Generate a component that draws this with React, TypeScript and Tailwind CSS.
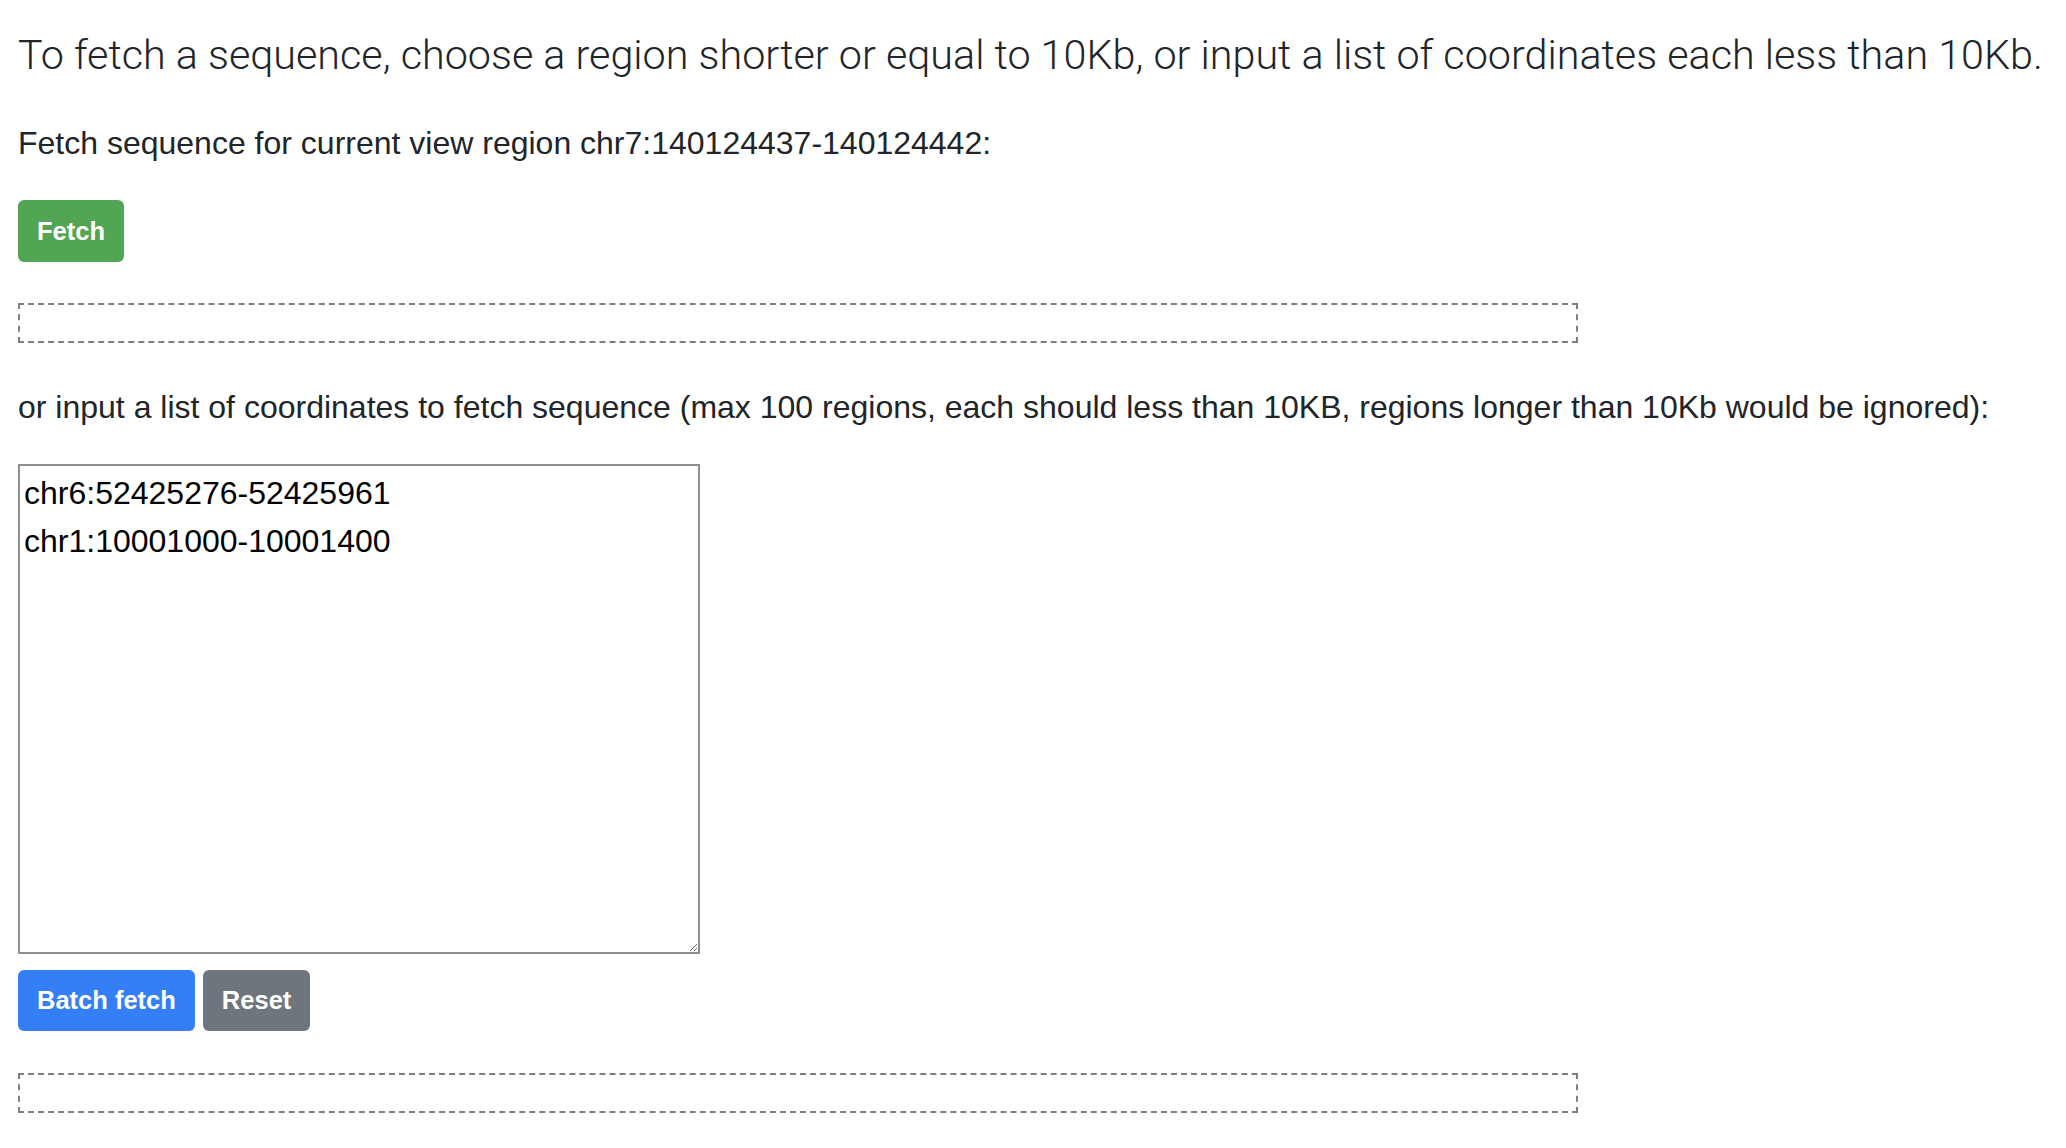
import React from 'react';

const App: React.FC = () => {
    return (
        <div className="min-h-screen bg-white px-[18px] text-[#212529]" style={{ fontFamily: '"Liberation Sans", Arial, sans-serif' }}>
            <p className="pt-[31px] text-[41.3px] leading-[48px] font-light whitespace-nowrap" style={{ fontFamily: 'Roboto, "Liberation Sans", sans-serif' }}>
                To fetch a sequence, choose a region shorter or equal to 10Kb, or input a list of coordinates each less than 10Kb.
            </p>
            <p className="mt-[40px] text-[32px] leading-[48px]">
                Fetch sequence for current view region chr7:140124437-140124442:
            </p>
            <div className="mt-[33px]">
                <button className="h-[62px] px-[19px] rounded-[6px] bg-[#52a552] text-white text-[25.5px] font-bold">
                    Fetch
                </button>
            </div>
            <div className="mt-[41px] h-[40px] w-[1560px] border-2 border-dashed border-[#7f7f7f]" />
            <p className="mt-[40px] text-[32px] leading-[48px] whitespace-nowrap">
                or input a list of coordinates to fetch sequence (max 100 regions, each should less than 10KB, regions longer than 10Kb would be ignored):
            </p>
            <textarea
                className="mt-[33px] block h-[490px] w-[682px] border-2 border-[#8f8f8f] px-[4px] pt-[3px] text-[32px] leading-[48px] text-black outline-none"
                style={{ fontFamily: '"Liberation Sans", Arial, sans-serif' }}
                defaultValue={'chr6:52425276-52425961\nchr1:10001000-10001400'}
            />
            <div className="mt-[16px] flex gap-[8px]">
                <button className="h-[61px] px-[19px] rounded-[6px] bg-[#347ef6] text-white text-[25.5px] font-bold">
                    Batch fetch
                </button>
                <button className="h-[61px] px-[19px] rounded-[6px] bg-[#6f757d] text-white text-[25.5px] font-bold">
                    Reset
                </button>
            </div>
            <div className="mt-[42px] h-[40px] w-[1560px] border-2 border-dashed border-[#7f7f7f]" />
        </div>
    );
};

export default App;
